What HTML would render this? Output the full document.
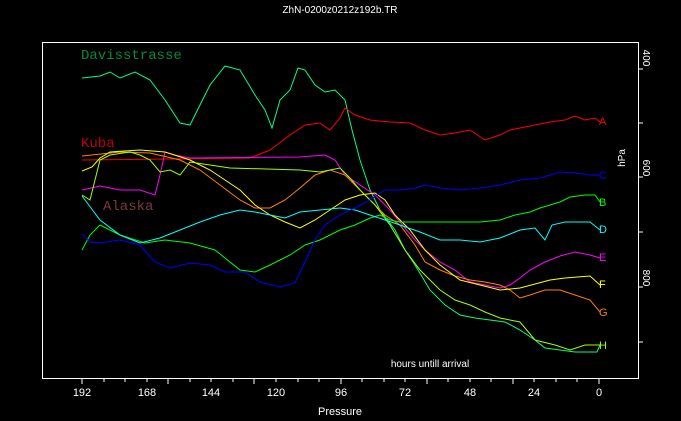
<!DOCTYPE html><html><head><style>body{margin:0;background:#000}svg{display:block}text{font-family:"Liberation Sans",sans-serif}</style></head><body>
<svg width="681" height="421" viewBox="0 0 681 421" xmlns="http://www.w3.org/2000/svg">
<rect width="681" height="421" fill="#000"/>
<text x="340" y="13" fill="#fff" font-size="10" text-anchor="middle">ZhN-0200z0212z192b.TR</text>
<rect x="42.5" y="42.5" width="596" height="336" fill="none" stroke="#fff"/>
<g stroke="#fff">
<path d="M82 378v6M104 378v4M125 378v4M147 378v4M168 378v6M190 378v4M211 378v4M233 378v4M254 378v6M276 378v4M298 378v4M319 378v4M341 378v6M362 378v4M384 378v4M405 378v4M427 378v6M448 378v4M470 378v4M491 378v4M513 378v6M534 378v4M556 378v4M577 378v4M599 378v6"/>
<path d="M638 69h5M638 123h5M638 177h5M638 232h5M638 287h5M638 342h5"/>
</g>
<g fill="#fff" font-size="11" text-anchor="middle">
<text x="82" y="396">192</text><text x="147" y="396">168</text><text x="211" y="396">144</text><text x="276" y="396">120</text><text x="341" y="396">96</text><text x="405" y="396">72</text><text x="470" y="396">48</text><text x="534" y="396">24</text><text x="599" y="396">0</text>
<text x="340" y="415">Pressure</text>
<text x="430" y="367" font-size="10">hours untill arrival</text>
<text transform="translate(643,58) rotate(90)" font-size="10">400</text>
<text transform="translate(643,168) rotate(90)" font-size="10">600</text>
<text transform="translate(643,278) rotate(90)" font-size="10">800</text>
<text transform="translate(625,158) rotate(-90)" font-size="10">hPa</text>
</g>
<g font-family="Liberation Mono, monospace" font-size="14">
<text x="81" y="59" fill="#008a3c" style="font-family:'Liberation Mono',monospace">Davisstrasse</text>
<text x="81" y="147" fill="#c00000" style="font-family:'Liberation Mono',monospace">Kuba</text>
<text x="103" y="210" fill="#7a3a3a" style="font-family:'Liberation Mono',monospace">Alaska</text>
</g>
<g fill="none" stroke-width="1">
<polyline stroke="#00ff80" points="82,78 100,76 110,72 120,78 135,72 150,80 165,100 180,123 190,125 200,105 210,85 225,66 240,70 255,95 265,110 272,128 280,100 290,90 298,68 305,70 315,85 325,92 335,90 345,100 352,130 360,160 370,190 380,210 395,230 405,250 415,265 430,290 445,305 460,315 475,318 490,320 505,322 520,330 535,340 545,348 560,350 575,352 597,352 600,345"/>
<polyline stroke="#ff0000" points="82,160 250,158 270,150 290,135 305,125 320,123 330,130 340,118 345,108 355,115 370,120 390,122 410,123 425,130 440,135 455,133 470,130 485,140 500,135 510,130 520,128 535,125 550,122 565,120 575,116 585,120 595,118 600,122"/>
<polyline stroke="#ff00ff" points="82,190 100,186 120,190 140,190 155,195 160,175 165,152 175,155 190,158 300,157 325,155 335,160 345,175 360,185 375,195 390,210 400,222 415,240 425,250 440,262 455,270 470,282 485,285 500,288 510,285 520,278 530,270 545,262 560,256 575,252 590,255 600,258"/>
<polyline stroke="#ff8000" points="82,156 120,152 150,153 180,160 200,170 220,185 240,200 255,208 270,208 285,200 300,188 315,175 330,170 345,175 360,190 375,205 385,215 400,225 415,245 425,262 440,270 455,276 470,280 485,282 500,285 510,290 520,298 530,295 545,290 560,290 575,295 590,300 600,312"/>
<polyline stroke="#ffff00" points="82,171 92,167 100,158 110,152 140,150 165,152 190,160 210,170 225,180 240,190 255,205 270,215 285,222 300,228 315,220 330,210 345,200 360,195 375,193 385,200 395,215 410,230 425,250 440,265 460,280 480,285 500,290 520,288 535,284 550,280 565,278 590,276 600,285"/>
<polyline stroke="#a0ff00" points="82,195 90,200 95,180 100,160 110,155 130,152 140,155 150,160 160,172 170,170 180,175 190,162 230,168 300,170 320,172 340,168 350,178 360,190 375,205 390,225 405,250 420,270 440,290 455,300 470,305 485,312 500,318 520,322 535,340 555,345 570,350 585,345 600,345"/>
<polyline stroke="#00ff00" points="82,250 90,235 100,225 120,235 145,243 165,240 190,243 215,250 240,270 255,272 270,265 290,255 305,245 320,240 340,230 355,225 370,218 380,215 390,220 400,222 480,222 500,220 515,215 530,212 540,208 550,205 560,202 570,197 585,195 595,195 600,202"/>
<polyline stroke="#00ffff" points="82,196 100,220 120,235 140,243 160,238 180,230 200,222 220,215 240,210 255,212 270,215 285,218 300,212 320,210 340,208 355,210 370,215 385,220 400,225 420,232 440,240 460,240 480,242 500,238 520,230 535,228 545,240 552,225 565,222 590,222 600,230"/>
<polyline stroke="#0000ff" points="82,234 90,242 100,243 120,240 140,245 155,262 170,268 190,263 210,265 225,272 245,272 260,282 280,287 295,283 305,262 315,240 325,225 340,215 355,208 370,200 385,190 400,190 415,188 425,185 440,188 460,190 480,188 500,185 520,180 540,178 560,172 575,173 590,175 600,175"/>
</g>
<g font-size="11">
<text x="599" y="125" fill="#ff0000">A</text>
<text x="599" y="179" fill="#0000ff">C</text>
<text x="599" y="206" fill="#00ff00">B</text>
<text x="599" y="233" fill="#00ffff">D</text>
<text x="599" y="261" fill="#ff00ff">E</text>
<text x="599" y="288" fill="#ffff00">F</text>
<text x="599" y="316" fill="#ff8000">G</text>
<text x="599" y="349" fill="#a0ff00">H</text>
</g>
</svg></body></html>
